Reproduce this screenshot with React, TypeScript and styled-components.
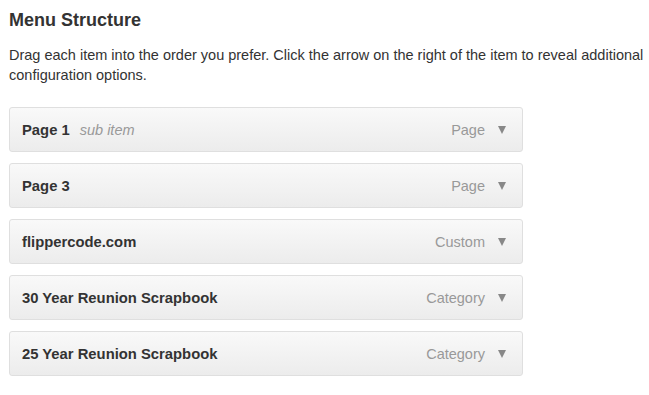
import React from "react";
import styled, { createGlobalStyle } from "styled-components";

const GlobalStyle = createGlobalStyle`
  body {
    margin: 0;
    background: #fff;
    font-family: "Liberation Sans", Arial, sans-serif;
    color: #333;
  }
`;

type MenuItem = {
  title: string;
  sub?: string;
  type: string;
};

const items: MenuItem[] = [
  { title: "Page 1", sub: "sub item", type: "Page" },
  { title: "Page 3", type: "Page" },
  { title: "flippercode.com", type: "Custom" },
  { title: "30 Year Reunion Scrapbook", type: "Category" },
  { title: "25 Year Reunion Scrapbook", type: "Category" },
];

const App = () => {
  return (
    <>
      <GlobalStyle />
      <Wrap>
        <Heading>Menu Structure</Heading>
        <Intro>
          Drag each item into the order you prefer. Click the arrow on the
          right of the item to reveal additional configuration options.
        </Intro>
        <List>
          {items.map((item, i) => (
            <Handle key={i}>
              <ItemTitle>
                {item.title}
                {item.sub && <SubLabel>{item.sub}</SubLabel>}
              </ItemTitle>
              <Controls>
                <ItemType>{item.type}</ItemType>
                <Arrow />
              </Controls>
            </Handle>
          ))}
        </List>
      </Wrap>
    </>
  );
};

export default App;

const Wrap = styled.div`
  padding: 9px 9px 0 9px;
`;

const Heading = styled.h3`
  margin: 0;
  font-size: 18px;
  line-height: 22px;
  font-weight: 700;
  color: #333;
`;

const Intro = styled.p`
  margin: 14px 0 0 0;
  font-size: 14.5px;
  line-height: 20px;
  color: #333;
  width: 640px;
`;

const List = styled.ul`
  list-style: none;
  margin: 22px 0 0 0;
  padding: 0;
  width: 514px;
  display: flex;
  flex-direction: column;
  gap: 11px;
`;

const Handle = styled.li`
  display: flex;
  align-items: center;
  justify-content: space-between;
  height: 43px;
  padding: 0 16px 0 12px;
  border: 1px solid #dfdfdf;
  border-radius: 3px;
  background: linear-gradient(to bottom, #f9f9f9, #ececec);
`;

const ItemTitle = styled.span`
  font-size: 14.8px;
  font-weight: 700;
  color: #333;
`;

const SubLabel = styled.span`
  font-size: 14.5px;
  font-weight: 400;
  font-style: italic;
  color: #999;
  margin-left: 10px;
`;

const Controls = styled.span`
  display: flex;
  align-items: center;
  gap: 13px;
`;

const ItemType = styled.span`
  font-size: 14.5px;
  color: #999;
`;

const Arrow = styled.span`
  width: 0;
  height: 0;
  border-left: 4.5px solid transparent;
  border-right: 4.5px solid transparent;
  border-top: 8px solid #888;
`;
